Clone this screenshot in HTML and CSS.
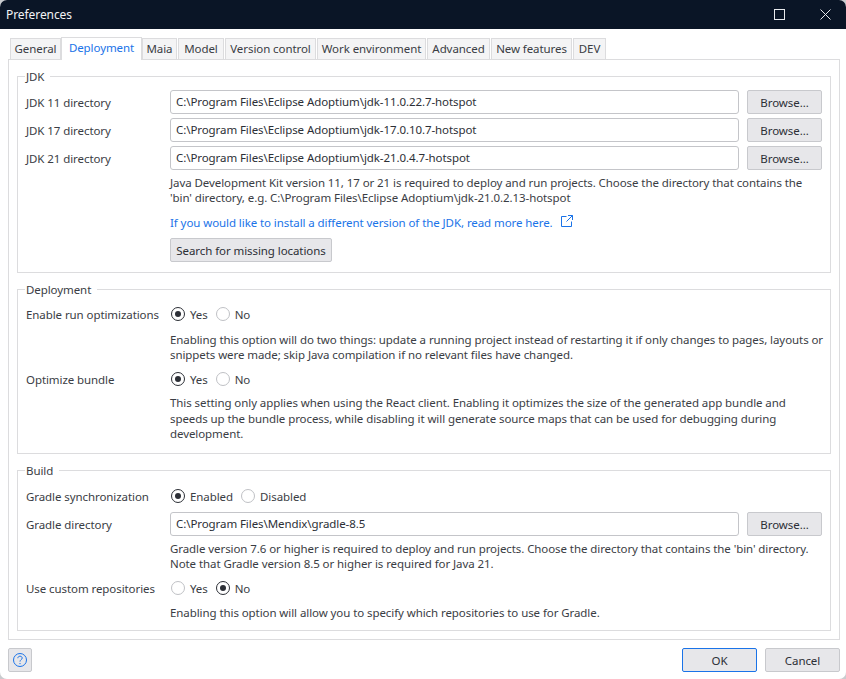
FILE: index.html
```html
<!DOCTYPE html>
<html lang="en">
<head>
<meta charset="utf-8">
<title>Preferences</title>
<link rel="stylesheet" href="styles.css">
</head>
<body>
<div class="window">
  <header class="titlebar">
    <span class="title">Preferences</span>
    <div class="win-controls">
      <svg class="win-icon" viewBox="0 0 11 11"><rect x="0.5" y="0.5" width="10" height="10" fill="none" stroke="#e8eaed" stroke-width="1"/></svg>
      <svg class="win-icon" viewBox="0 0 11 11"><path d="M0.5 0.5L10.5 10.5M10.5 0.5L0.5 10.5" fill="none" stroke="#e8eaed" stroke-width="1"/></svg>
    </div>
  </header>
  <div class="tabs">
    <span class="tab tab-general">General</span>
    <span class="tab tab-active">Deployment</span>
    <span class="tab tab-maia">Maia</span>
    <span class="tab tab-model">Model</span>
    <span class="tab tab-vc">Version control</span>
    <span class="tab tab-work">Work environment</span>
    <span class="tab tab-adv">Advanced</span>
    <span class="tab tab-new">New features</span>
    <span class="tab tab-dev">DEV</span>
  </div>
  <main class="panel">
    <fieldset class="group group-jdk">
      <legend>JDK</legend>
      <div class="row row-input">
        <label>JDK 11 directory</label>
        <div class="path-field"><div class="input">C:\Program Files\Eclipse Adoptium\jdk-11.0.22.7-hotspot</div><button class="btn browse">Browse...</button></div>
      </div>
      <div class="row row-input">
        <label>JDK 17 directory</label>
        <div class="path-field"><div class="input">C:\Program Files\Eclipse Adoptium\jdk-17.0.10.7-hotspot</div><button class="btn browse">Browse...</button></div>
      </div>
      <div class="row row-input">
        <label>JDK 21 directory</label>
        <div class="path-field"><div class="input">C:\Program Files\Eclipse Adoptium\jdk-21.0.4.7-hotspot</div><button class="btn browse">Browse...</button></div>
      </div>
      <div class="help help-jdk">Java Development Kit version 11, 17 or 21 is required to deploy and run projects. Choose the directory that contains the<br>'bin' directory, e.g. C:\Program Files\Eclipse Adoptium\jdk-21.0.2.13-hotspot</div>
      <div class="link-row">
        <span class="link">If you would like to install a different version of the JDK, read more here.</span>
        <svg class="ext-icon" viewBox="0 0 12 12"><path d="M5.5 1.5H0.5V11.5H10.5V6.5M7 0.5H11.5V5M11.5 0.5L5.5 6.5" fill="none" stroke="#1a73e8" stroke-width="1"/></svg>
      </div>
      <button class="btn search">Search for missing locations</button>
    </fieldset>
    <fieldset class="group group-deploy">
      <legend>Deployment</legend>
      <div class="row row-radio row-run">
        <label>Enable run optimizations</label>
        <div class="radios"><span class="radio on"></span><span class="radio-label">Yes</span><span class="radio"></span><span class="radio-label">No</span></div>
      </div>
      <div class="help help-run">Enabling this option will do two things: update a running project instead of restarting it if only changes to pages, layouts or<br>snippets were made; skip Java compilation if no relevant files have changed.</div>
      <div class="row row-radio row-bundle">
        <label>Optimize bundle</label>
        <div class="radios"><span class="radio on"></span><span class="radio-label">Yes</span><span class="radio"></span><span class="radio-label">No</span></div>
      </div>
      <div class="help help-bundle">This setting only applies when using the React client. Enabling it optimizes the size of the generated app bundle and<br>speeds up the bundle process, while disabling it will generate source maps that can be used for debugging during<br>development.</div>
    </fieldset>
    <fieldset class="group group-build">
      <legend>Build</legend>
      <div class="row row-radio row-sync">
        <label>Gradle synchronization</label>
        <div class="radios"><span class="radio on"></span><span class="radio-label">Enabled</span><span class="radio"></span><span class="radio-label">Disabled</span></div>
      </div>
      <div class="row row-input row-gradle">
        <label>Gradle directory</label>
        <div class="path-field"><div class="input">C:\Program Files\Mendix\gradle-8.5</div><button class="btn browse">Browse...</button></div>
      </div>
      <div class="help help-gradle">Gradle version 7.6 or higher is required to deploy and run projects. Choose the directory that contains the 'bin' directory.<br>Note that Gradle version 8.5 or higher is required for Java 21.</div>
      <div class="row row-radio row-repos">
        <label>Use custom repositories</label>
        <div class="radios"><span class="radio"></span><span class="radio-label">Yes</span><span class="radio on"></span><span class="radio-label">No</span></div>
      </div>
      <div class="help help-repos">Enabling this option will allow you to specify which repositories to use for Gradle.</div>
    </fieldset>
  </main>
  <footer class="footer">
    <button class="btn help-btn" aria-label="Help">
      <svg viewBox="0 0 16 16" class="help-icon"><circle cx="8" cy="8" r="6.5" fill="none" stroke="#1a73e8" stroke-width="1"/><path d="M5.8 6.2C5.9 4.9 6.8 4.2 8 4.2C9.3 4.2 10.2 5 10.2 6.1C10.2 7.6 8 7.7 8 9.6" fill="none" stroke="#1a73e8" stroke-width="1"/><circle cx="8" cy="11.6" r="0.7" fill="#1a73e8"/></svg>
    </button>
    <div class="actions">
      <button class="btn ok">OK</button>
      <button class="btn cancel">Cancel</button>
    </div>
  </footer>
</div>
</body>
</html>
```
FILE: styles.css
```css
* { box-sizing: border-box; }
html, body { margin: 0; height: 100%; }
body {
  background: #c9cbce;
  font-family: "Noto Sans", "Open Sans", sans-serif;
  font-size: 11.5px;
  letter-spacing: -0.08px;
  color: #2c2f36;
  overflow: hidden;
}
.window {
  width: 846px;
  height: 679px;
  background: #fff;
  border-radius: 7px;
  overflow: hidden;
  display: flex;
  flex-direction: column;
}
.titlebar {
  height: 29px;
  flex: none;
  background: #0a1526;
  color: #f2f3f5;
  display: flex;
  align-items: center;
  justify-content: space-between;
  padding: 0 15px 0 6px;
  font-size: 12px;
}
.win-controls { display: flex; gap: 35px; align-items: center; padding-bottom: 1px; }
.win-icon { width: 11px; height: 11px; display: block; }
.tabs {
  height: 30px;
  flex: none;
  padding: 8px 0 0 10px;
  display: flex;
  align-items: flex-end;
  gap: 1px;
}
.tab {
  height: 21px;
  line-height: 20px;
  background: #f4f4f5;
  border: 1px solid #dcdcde;
  border-bottom: 0;
  text-align: center;
  color: #3a3d44;
  white-space: nowrap;
}
.tab-general { width: 51px; }
.tab-active {
  width: 81px;
  height: 23px;
  background: #fff;
  color: #1a73e8;
  margin: 0 -1px -1px;
  position: relative;
}
.tab-maia { width: 35px; }
.tab-model { width: 46px; }
.tab-vc { width: 91px; }
.tab-work { width: 109px; }
.tab-adv { width: 63px; }
.tab-new { width: 81px; }
.tab-dev { width: 33px; }
.panel {
  width: 832px;
  height: 581px;
  margin-left: 8px;
  border: 1px solid #dcdcde;
  padding: 10px 8px 0;
  flex: none;
  display: flex;
  flex-direction: column;
}
.group {
  margin: 0;
  padding: 0 8px;
  border: 1px solid #dcdcde;
  min-width: 0;
  flex: none;
}
.group legend {
  padding: 0 6px 0 1px;
  margin-left: -1px;
  line-height: 13px;
  color: #3a3d44;
}
.group-jdk { height: 203px; }
.group-deploy { height: 171px; margin-top: 10px; }
.group-build { height: 167px; margin-top: 10px; }
.row {
  display: grid;
  grid-template-columns: 144px 1fr;
  align-items: center;
}
.row label { color: #3a3d44; white-space: nowrap; }
.row-input { height: 24px; margin-bottom: 4px; }
.group-jdk .row-input:first-of-type { margin-top: 7px; }
.path-field { display: flex; gap: 8px; }
.input {
  flex: 1;
  height: 24px;
  line-height: 22px;
  padding: 0 5px;
  border: 1px solid #c4c5c9;
  border-radius: 3px;
  background: #fff;
  white-space: nowrap;
}
.btn {
  font: inherit;
  letter-spacing: inherit;
  color: #2c2f36;
  background: #e7e7ea;
  border: 1px solid #c8c9cd;
  border-radius: 2px;
  height: 24px;
  padding: 0;
  white-space: nowrap;
}
.browse { width: 75px; flex: none; }
.help {
  margin-left: 144px;
  line-height: 15px;
  white-space: nowrap;
  color: #3a3d44;
}
.help-jdk { margin-top: 5px; }
.link-row {
  margin: 9px 0 0 144px;
  height: 16px;
  display: flex;
  align-items: center;
  gap: 8px;
  color: #1a73e8;
}
.ext-icon { width: 12px; height: 12px; display: block; margin-top: -2px; }
.search { display: block; margin: 8px 0 0 144px; width: 162px; }
.row-radio { height: 24px; }
.radios { display: flex; align-items: center; }
.radio {
  width: 14px;
  height: 14px;
  flex: none;
  border: 1px solid #bfc1c5;
  border-radius: 50%;
  margin-left: 1px;
  display: flex;
  align-items: center;
  justify-content: center;
}
.radio.on { border-color: #2c2f36; }
.radio.on::after {
  content: "";
  width: 6px;
  height: 6px;
  border-radius: 50%;
  background: #2c2f36;
}
.radio-label { margin: 0 7px 0 5px; color: #3a3d44; }
.row-run { margin-top: 6px; }
.help-run { margin-top: 6px; }
.row-bundle { margin-top: 5px; }
.help-bundle { margin-top: 4px; line-height: 15.5px; }
.row-sync { margin-top: 7px; }
.row-gradle { margin-top: 4px; margin-bottom: 0; }
.help-gradle { margin-top: 5px; }
.row-repos { margin-top: 5px; }
.help-repos { margin-top: 5px; }
.footer {
  flex: 1;
  padding: 8px 6px 0 8px;
  display: flex;
  justify-content: space-between;
  align-items: flex-start;
}
.help-btn { width: 24px; display: flex; align-items: center; justify-content: center; }
.help-icon { width: 16px; height: 16px; display: block; }
.actions { display: flex; gap: 8px; }
.ok { width: 75px; border-color: #1a73e8; }
.cancel { width: 75px; }
```
